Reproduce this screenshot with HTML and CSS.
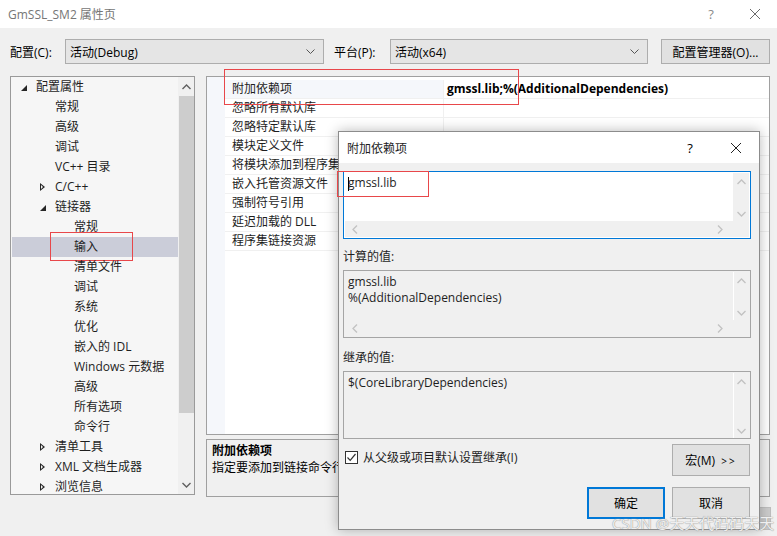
FILE: index.html
```html
<!DOCTYPE html>
<html lang="zh-CN">
<head>
  <meta charset="UTF-8" />
  <title>GmSSL_SM2 属性页</title>
  <link rel="stylesheet" href="styles.css">
</head>
<body>
  <div class="window">
    <div class="titlebar">
      <span class="title">GmSSL_SM2 属性页</span>
      <span class="cap-btn help">?</span>
      <span class="cap-btn close">
        <svg width="12" height="12" viewBox="0 0 12 12"><path d="M1 1L11 11M11 1L1 11" stroke="#6b6b6b" stroke-width="1" fill="none"/></svg>
      </span>
    </div>

    <div class="config-row">
      <label class="cfg-label">配置(C):</label>
      <div class="combo combo-config"><span>活动(Debug)</span><svg class="caret" width="9" height="6" viewBox="0 0 9 6"><path d="M0.5 0.5L4.5 4.5L8.5 0.5" stroke="#555" fill="none"/></svg></div>
      <label class="cfg-label plat">平台(P):</label>
      <div class="combo combo-plat"><span>活动(x64)</span><svg class="caret" width="9" height="6" viewBox="0 0 9 6"><path d="M0.5 0.5L4.5 4.5L8.5 0.5" stroke="#555" fill="none"/></svg></div>
      <button class="btn cfg-mgr">配置管理器(O)...</button>
    </div>

    <div class="main">
      <div class="tree">
        <div class="tree-list">
          <div class="node lv0"><span class="arrow open"></span>配置属性</div>
          <div class="node lv1">常规</div>
          <div class="node lv1">高级</div>
          <div class="node lv1">调试</div>
          <div class="node lv1">VC++ 目录</div>
          <div class="node lv1"><span class="arrow closed"></span>C/C++</div>
          <div class="node lv1"><span class="arrow open"></span>链接器</div>
          <div class="node lv2">常规</div>
          <div class="node lv2 selected"><span class="mark">输入</span></div>
          <div class="node lv2">清单文件</div>
          <div class="node lv2">调试</div>
          <div class="node lv2">系统</div>
          <div class="node lv2">优化</div>
          <div class="node lv2">嵌入的 IDL</div>
          <div class="node lv2">Windows 元数据</div>
          <div class="node lv2">高级</div>
          <div class="node lv2">所有选项</div>
          <div class="node lv2">命令行</div>
          <div class="node lv1"><span class="arrow closed"></span>清单工具</div>
          <div class="node lv1"><span class="arrow closed"></span>XML 文档生成器</div>
          <div class="node lv1"><span class="arrow closed"></span>浏览信息</div>
        </div>
        <div class="vscroll">
          <svg class="sb-arrow" width="9" height="6" viewBox="0 0 9 6"><path d="M0.5 5L4.5 1L8.5 5" stroke="#606060" stroke-width="1.4" fill="none"/></svg>
          <div class="thumb"></div>
          <svg class="sb-arrow" width="9" height="6" viewBox="0 0 9 6"><path d="M0.5 1L4.5 5L8.5 1" stroke="#606060" stroke-width="1.4" fill="none"/></svg>
        </div>
      </div>

      <div class="right">
        <div class="grid">
          <div class="gutter"></div>
          <div class="rows">
            <div class="row first"><div class="name"><span class="mark wide">附加依赖项</span></div><div class="value">gmssl.lib;%(AdditionalDependencies)</div></div>
            <div class="row"><div class="name">忽略所有默认库</div><div class="value"></div></div>
            <div class="row"><div class="name">忽略特定默认库</div><div class="value"></div></div>
            <div class="row"><div class="name">模块定义文件</div><div class="value"></div></div>
            <div class="row"><div class="name">将模块添加到程序集</div><div class="value"></div></div>
            <div class="row"><div class="name">嵌入托管资源文件</div><div class="value"></div></div>
            <div class="row"><div class="name">强制符号引用</div><div class="value"></div></div>
            <div class="row"><div class="name">延迟加载的 DLL</div><div class="value"></div></div>
            <div class="row"><div class="name">程序集链接资源</div><div class="value"></div></div>
          </div>
        </div>
        <div class="desc">
          <div class="desc-title">附加依赖项</div>
          <div class="desc-text">指定要添加到链接命令行的附加项。[例如 kernel32.lib]</div>
        </div>
      </div>
    </div>

    <div class="footer">
      <button class="btn foot">确定</button>
      <button class="btn foot">取消</button>
      <button class="btn foot disabled">应用(A)</button>
    </div>
  </div>

  <div class="dialog">
    <div class="dlg-title">
      <span class="title">附加依赖项</span>
      <span class="cap-btn help">?</span>
      <span class="cap-btn close">
        <svg width="12" height="12" viewBox="0 0 12 12"><path d="M1 1L11 11M11 1L1 11" stroke="#222" stroke-width="1" fill="none"/></svg>
      </span>
    </div>
    <div class="dlg-body">
      <div class="edit active">
        <div class="edit-main">
          <div class="edit-text"><span class="mark input-mark"><span class="caret-line"></span>gmssl.lib</span></div>
          <div class="e-vscroll">
            <svg width="9" height="6" viewBox="0 0 9 6"><path d="M0.5 5L4.5 1L8.5 5" stroke="#c2c2c2" stroke-width="1.3" fill="none"/></svg>
            <svg width="9" height="6" viewBox="0 0 9 6"><path d="M0.5 1L4.5 5L8.5 1" stroke="#c2c2c2" stroke-width="1.3" fill="none"/></svg>
          </div>
        </div>
        <div class="e-hscroll">
          <svg width="6" height="9" viewBox="0 0 6 9"><path d="M5 0.5L1 4.5L5 8.5" stroke="#c2c2c2" stroke-width="1.3" fill="none"/></svg>
          <svg width="6" height="9" viewBox="0 0 6 9"><path d="M1 0.5L5 4.5L1 8.5" stroke="#c2c2c2" stroke-width="1.3" fill="none"/></svg>
        </div>
      </div>

      <div class="dlg-label">计算的值:</div>
      <div class="edit readonly">
        <div class="edit-main">
          <div class="edit-text">gmssl.lib<br>%(AdditionalDependencies)</div>
          <div class="e-vscroll">
            <svg width="9" height="6" viewBox="0 0 9 6"><path d="M0.5 5L4.5 1L8.5 5" stroke="#c2c2c2" stroke-width="1.3" fill="none"/></svg>
            <svg width="9" height="6" viewBox="0 0 9 6"><path d="M0.5 1L4.5 5L8.5 1" stroke="#c2c2c2" stroke-width="1.3" fill="none"/></svg>
          </div>
        </div>
        <div class="e-hscroll">
          <svg width="6" height="9" viewBox="0 0 6 9"><path d="M5 0.5L1 4.5L5 8.5" stroke="#c2c2c2" stroke-width="1.3" fill="none"/></svg>
          <svg width="6" height="9" viewBox="0 0 6 9"><path d="M1 0.5L5 4.5L1 8.5" stroke="#c2c2c2" stroke-width="1.3" fill="none"/></svg>
        </div>
      </div>

      <div class="dlg-label second">继承的值:</div>
      <div class="edit readonly">
        <div class="edit-main full">
          <div class="edit-text">$(CoreLibraryDependencies)</div>
          <div class="e-vscroll">
            <svg width="9" height="6" viewBox="0 0 9 6"><path d="M0.5 5L4.5 1L8.5 5" stroke="#c2c2c2" stroke-width="1.3" fill="none"/></svg>
            <svg width="9" height="6" viewBox="0 0 9 6"><path d="M0.5 1L4.5 5L8.5 1" stroke="#c2c2c2" stroke-width="1.3" fill="none"/></svg>
          </div>
        </div>
      </div>

      <div class="opts">
        <label class="check">
          <span class="box"><svg width="11" height="11" viewBox="0 0 11 11"><path d="M1.5 5.5L4.2 8.3L9.5 2" stroke="#333" stroke-width="1.2" fill="none"/></svg></span>
          从父级或项目默认设置继承(I)
        </label>
        <button class="btn dlg-btn macro">宏(M) <span class="chev">&gt;&gt;</span></button>
      </div>

      <div class="dlg-actions">
        <button class="btn dlg-btn ok">确定</button>
        <button class="btn dlg-btn">取消</button>
      </div>
    </div>
  </div>

  <div class="watermark">CSDN @天天代码码天天</div>
</body>
</html>
```

FILE: styles.css
```css
* {
  box-sizing: border-box;
}
body {
  margin: 0;
  width: 777px;
  height: 536px;
  overflow: hidden;
  position: relative;
  background: #f0f0f0;
  font-family: "Open Sans", "Noto Sans CJK SC", sans-serif;
  font-size: 12px;
  color: #000;
}
.window {
  width: 777px;
  height: 536px;
  display: flex;
  flex-direction: column;
}
.titlebar {
  height: 28px;
  background: #fff;
  display: flex;
  align-items: center;
  padding-left: 8px;
  color: #767676;
}
.titlebar .title {
  flex: 1;
  font-size: 12px;
}
.cap-btn {
  width: 44px;
  text-align: center;
  font-size: 13px;
  display: flex;
  justify-content: center;
  align-items: center;
}
.titlebar .help {
  color: #8a8a8a;
}

.config-row {
  display: flex;
  align-items: center;
  padding: 11px 0 0 10px;
  height: 36px;
}
.cfg-label {
  width: 55px;
}
.cfg-label.plat {
  width: 56px;
  margin-left: 10px;
}
.combo {
  height: 25px;
  background: #e5e5e5;
  border: 1px solid #adadad;
  display: flex;
  align-items: center;
  justify-content: space-between;
  padding: 0 8px 0 4px;
}
.combo-config {
  width: 259px;
}
.combo-plat {
  width: 258px;
}
.btn {
  font-family: "Open Sans", "Noto Sans CJK SC", sans-serif;
  font-size: 12px;
  background: #e1e1e1;
  border: 1px solid #adadad;
  color: #000;
  padding: 0;
}
.cfg-mgr {
  width: 109px;
  height: 25px;
  margin-left: 13px;
}

.main {
  display: flex;
  margin-top: 12px;
  padding-left: 10px;
  height: 425px;
}
.tree {
  width: 185px;
  height: 419px;
  border: 1px solid #9a9a9a;
  background: #f6f6f6;
  display: flex;
}
.tree-list {
  flex: 1;
}
.node {
  height: 20px;
  line-height: 20px;
  position: relative;
  white-space: nowrap;
  color: #1e1e1e;
}
.lv0 {
  padding-left: 25px;
}
.lv1 {
  padding-left: 44px;
}
.lv2 {
  padding-left: 63px;
}
.node.selected {
  background: #cbcdd9;
  margin: 0 0 0 1px;
  padding-left: 62px;
}
.arrow {
  position: absolute;
  width: 0;
  height: 0;
  border-style: solid;
}
.lv0 .arrow {
  left: 10px;
}
.lv1 .arrow {
  left: 29px;
}
.arrow.open {
  border-width: 0 0 6px 6px;
  border-color: transparent transparent #262626 transparent;
  top: 8px;
}
.arrow.closed {
  border-width: 4px 0 4px 5px;
  border-color: transparent transparent transparent #262626;
  top: 6px;
}
.arrow.closed::after {
  content: "";
  position: absolute;
  left: -4px;
  top: -2px;
  border-style: solid;
  border-width: 2px 0 2px 2.5px;
  border-color: transparent transparent transparent #f6f6f6;
}
.mark {
  outline: 1px solid #e8474a;
}
.node .mark {
  display: inline-block;
  height: 27px;
  line-height: 27px;
  width: 81px;
  margin-left: -23px;
  padding-left: 23px;
  margin-top: -4px;
  vertical-align: top;
}
.vscroll {
  width: 16px;
  background: #f0f0f0;
  display: flex;
  flex-direction: column;
  align-items: center;
}
.sb-arrow {
  margin: 7px 0;
}
.thumb {
  width: 15px;
  height: 317px;
  background: #cdcdcd;
  margin-top: -1px;
}
.vscroll .sb-arrow:last-child {
  margin-top: auto;
  margin-bottom: 6px;
}

.right {
  margin-left: 11px;
  width: 564px;
  display: flex;
  flex-direction: column;
}
.grid {
  height: 359px;
  border: 1px solid #a0a0a0;
  background: #fff;
  display: flex;
  padding-top: 3px;
}
.gutter {
  width: 18px;
  background: #f5f7fb;
  margin-top: -3px;
}
.rows {
  flex: 1;
}
.row {
  height: 19px;
  display: flex;
  border-bottom: 1px solid #f0f0f0;
}
.row .name {
  width: 218px;
  padding-left: 7px;
  line-height: 18px;
  white-space: nowrap;
  overflow: hidden;
  color: #1e1e1e;
}
.row .value {
  flex: 1;
  border-left: 1px solid #f0f0f0;
  padding-left: 3px;
  line-height: 18px;
  font-weight: bold;
}
.row.first .name {
  background: #f5f7fb;
  overflow: visible;
}
.name .mark.wide {
  display: inline-block;
  width: 293px;
  height: 34px;
  margin: -10px 0 0 -7px;
  padding: 10px 0 0 7px;
  vertical-align: top;
  position: relative;
  z-index: 1;
}
.desc {
  margin-top: 4px;
  height: 58px;
  border: 1px solid #a0a0a0;
  padding: 2px 5px;
  white-space: nowrap;
  overflow: hidden;
  line-height: 17px;
}
.desc-title {
  font-weight: bold;
}

.footer {
  display: flex;
  justify-content: flex-end;
  gap: 9px;
  padding: 6px 6px 0 0;
}
.btn.foot {
  width: 77px;
  height: 23px;
}
.btn.foot.disabled {
  background: #cccccc;
  color: #838383;
  border-color: #bfbfbf;
}

.dialog {
  position: absolute;
  left: 338px;
  top: 131px;
  width: 422px;
  height: 399px;
  background: #f0f0f0;
  border: 1px solid #8c8c8c;
  box-shadow: 0 0 12px rgba(0, 0, 0, 0.28);
  display: flex;
  flex-direction: column;
}
.dlg-title {
  height: 31px;
  background: #fff;
  display: flex;
  align-items: center;
  padding-left: 8px;
}
.dlg-title .title {
  flex: 1;
  color: #1e1e1e;
}
.dlg-title .help {
  width: 46px;
  font-size: 13px;
}
.dlg-title .close {
  width: 46px;
}
.dlg-body {
  padding: 8px 0 0 4px;
}
.edit {
  width: 408px;
  height: 68px;
  border: 1px solid #a5a5a5;
  display: flex;
  flex-direction: column;
}
.edit.active {
  border-color: #0078d7;
  background: #fff;
}
.edit.readonly {
  background: #f0f0f0;
}
.edit-main {
  flex: 1;
  display: flex;
  padding-top: 1px;
}
.edit-text {
  flex: 1;
  padding: 2px 4px;
  line-height: 16px;
  color: #1e1e1e;
}
.input-mark {
  display: inline-block;
  position: relative;
  width: 90px;
  height: 24px;
  margin: -4px 0 0 -10px;
  padding: 3px 0 0 10px;
}
.caret-line {
  position: absolute;
  left: 10px;
  top: 5px;
  width: 1px;
  height: 14px;
  background: #000;
}
.e-vscroll {
  width: 16px;
  background: #f0f0f0;
  display: flex;
  flex-direction: column;
  justify-content: space-between;
  align-items: center;
  padding: 6px 0 4px;
  margin-right: 1px;
}
.edit.readonly .e-vscroll {
  border-left: 1px solid #fff;
}
.e-hscroll {
  height: 16px;
  background: #f0f0f0;
  margin: 0 1px 1px;
  display: flex;
  justify-content: space-between;
  align-items: center;
  padding: 0 26px 0 7px;
}
.dlg-label {
  margin-top: 10px;
  height: 21px;
  line-height: 16px;
  color: #1e1e1e;
}
.dlg-label.second {
  margin-top: 12px;
}
.opts {
  margin-top: 5px;
  display: flex;
  align-items: flex-start;
  justify-content: space-between;
  width: 408px;
}
.check {
  display: flex;
  align-items: center;
  margin-top: 4px;
  padding-left: 2px;
  color: #1e1e1e;
}
.box {
  width: 13px;
  height: 13px;
  border: 1px solid #333;
  background: #fff;
  margin-right: 5px;
  display: flex;
  align-items: center;
  justify-content: center;
}
.dlg-btn {
  width: 78px;
  height: 32px;
}
.macro {
  margin-right: 1px;
}
.chev {
  font-size: 10px;
  letter-spacing: 2px;
  margin-left: 3px;
}
.dlg-actions {
  margin-top: 11px;
  display: flex;
  justify-content: flex-end;
  gap: 7px;
  width: 407px;
}
.dlg-btn.ok {
  border: 2px solid #0078d7;
}
.watermark {
  position: absolute;
  left: 612px;
  top: 512px;
  font-size: 15px;
  color: rgba(255, 255, 255, 0.85);
  text-shadow: 0 0 1px #9a9a9a, 0 0 1px #9a9a9a;
  white-space: nowrap;
  font-family: "Open Sans", "Noto Sans CJK SC", sans-serif;
}
```
